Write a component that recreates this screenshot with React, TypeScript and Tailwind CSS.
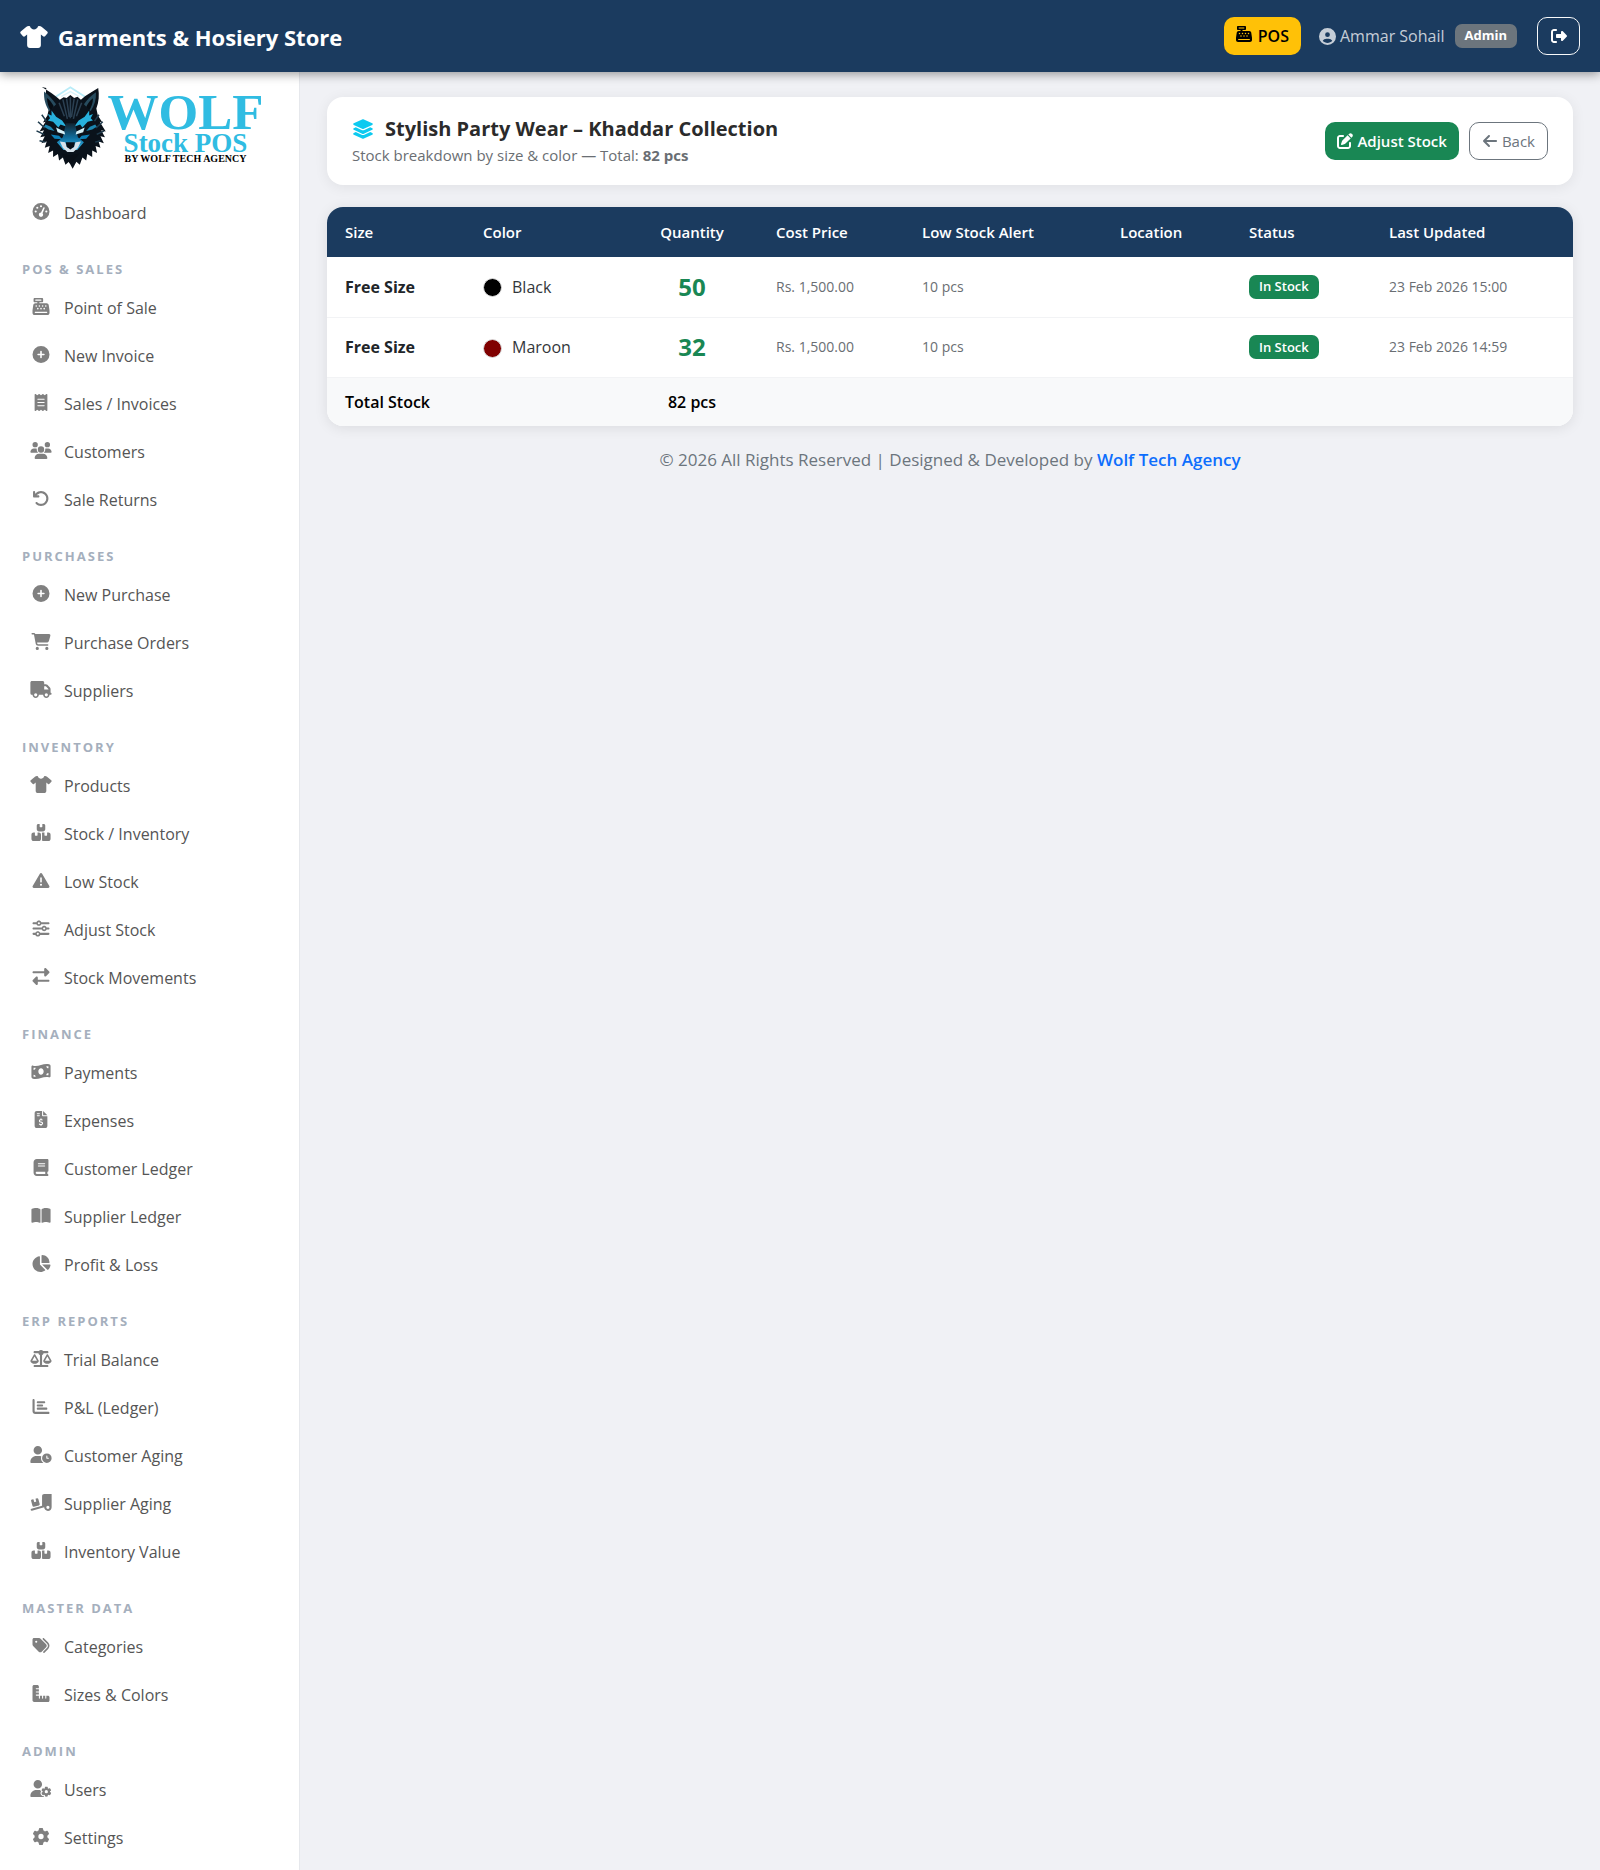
import type { IconType } from "react-icons";
import {
  FaArrowLeft,
  FaArrowRotateLeft,
  FaBook,
  FaBookOpen,
  FaBoxesStacked,
  FaCartShopping,
  FaCashRegister,
  FaChartBar,
  FaChartPie,
  FaCircleUser,
  FaCirclePlus,
  FaFileInvoiceDollar,
  FaGaugeHigh,
  FaGear,
  FaLayerGroup,
  FaMoneyBillWave,
  FaPenToSquare,
  FaReceipt,
  FaRightFromBracket,
  FaRightLeft,
  FaRulerCombined,
  FaScaleBalanced,
  FaShirt,
  FaSliders,
  FaTags,
  FaTriangleExclamation,
  FaTruck,
  FaTruckRampBox,
  FaUserClock,
  FaUserGear,
  FaUsers,
} from "react-icons/fa6";

type NavItem = { label: string; icon: IconType };
type NavGroup = { title?: string; items: NavItem[] };

const nav: NavGroup[] = [
  { items: [{ label: "Dashboard", icon: FaGaugeHigh }] },
  {
    title: "POS & Sales",
    items: [
      { label: "Point of Sale", icon: FaCashRegister },
      { label: "New Invoice", icon: FaCirclePlus },
      { label: "Sales / Invoices", icon: FaReceipt },
      { label: "Customers", icon: FaUsers },
      { label: "Sale Returns", icon: FaArrowRotateLeft },
    ],
  },
  {
    title: "Purchases",
    items: [
      { label: "New Purchase", icon: FaCirclePlus },
      { label: "Purchase Orders", icon: FaCartShopping },
      { label: "Suppliers", icon: FaTruck },
    ],
  },
  {
    title: "Inventory",
    items: [
      { label: "Products", icon: FaShirt },
      { label: "Stock / Inventory", icon: FaBoxesStacked },
      { label: "Low Stock", icon: FaTriangleExclamation },
      { label: "Adjust Stock", icon: FaSliders },
      { label: "Stock Movements", icon: FaRightLeft },
    ],
  },
  {
    title: "Finance",
    items: [
      { label: "Payments", icon: FaMoneyBillWave },
      { label: "Expenses", icon: FaFileInvoiceDollar },
      { label: "Customer Ledger", icon: FaBook },
      { label: "Supplier Ledger", icon: FaBookOpen },
      { label: "Profit & Loss", icon: FaChartPie },
    ],
  },
  {
    title: "ERP Reports",
    items: [
      { label: "Trial Balance", icon: FaScaleBalanced },
      { label: "P&L (Ledger)", icon: FaChartBar },
      { label: "Customer Aging", icon: FaUserClock },
      { label: "Supplier Aging", icon: FaTruckRampBox },
      { label: "Inventory Value", icon: FaBoxesStacked },
    ],
  },
  {
    title: "Master Data",
    items: [
      { label: "Categories", icon: FaTags },
      { label: "Sizes & Colors", icon: FaRulerCombined },
    ],
  },
  {
    title: "Admin",
    items: [
      { label: "Users", icon: FaUserGear },
      { label: "Settings", icon: FaGear },
    ],
  },
];

const rows = [
  { size: "Free Size", color: "Black", dot: "bg-black", qty: 50, cost: "Rs. 1,500.00", alert: "10 pcs", updated: "23 Feb 2026 15:00" },
  { size: "Free Size", color: "Maroon", dot: "bg-[#800000]", qty: 32, cost: "Rs. 1,500.00", alert: "10 pcs", updated: "23 Feb 2026 14:59" },
];

function WolfHead() {
  return (
    <svg viewBox="14 1 202 262" preserveAspectRatio="none" className="h-[92px] w-[76px] shrink-0" aria-hidden="true">
      <defs>
        <linearGradient id="face" x1="0" y1="0" x2="0" y2="1">
          <stop offset="0" stopColor="#12232f" />
          <stop offset="0.55" stopColor="#0f6f9f" />
          <stop offset="1" stopColor="#38b6e8" />
        </linearGradient>
      </defs>
      <path d="M78 48 116 22l38 26" fill="none" stroke="#b9ecf8" strokeWidth="5" />
      <path d="M92 48l24-14 24 14" fill="none" stroke="#d8f3fa" strokeWidth="4" />
      {/* fur silhouette */}
      <path
        d="M40 21c18 12 34 22 48 36l10-7 8 2 10-8 10 8 9-3 9 8c14-14 30-22 46-33 3 20 2 40-5 58l4 20 12 20-7-2 16 28-12-4 10 20-12-3 9 20-14-5 5 18-13-5 4 20-13-7 0 18-13-8-3 18-10-8-7 20-9-8-10 20-10-20-9 8-7-20-10 8-3-18-13 8 0-18-13 7 4-20-13 5 5-18-14 5 9-20-12 3 10-20-12 4 16-28-7 2 12-20 4-20c-8-18-10-38-7-58z"
        fill="#0a121b"
      />
      {/* ears */}
      <path d="M46 34c12 10 22 22 32 36l-18 20c-10-16-15-34-14-56zM184 36c-12 9-23 20-32 34l18 20c10-16 15-34 14-54z" fill="#274b5e" />
      <path d="M54 52c8 7 13 14 18 24l-8 12c-6-11-10-22-10-36zM176 53c-8 7-13 14-18 24l8 11c6-11 10-21 10-35z" fill="#070d14" />
      {/* forehead strands */}
      <path d="M96 56l12 56M106 54l7 52M116 50v60M126 54l-7 52M136 56l-12 56M86 66l14 38M146 66l-14 38" stroke="#2b4052" strokeWidth="4" />
      <path d="M40 100l12 18M30 120l18 18M26 146l20 10M34 174l16 4M192 100l-12 18M202 120l-18 18M206 146l-20 10M196 174l-14 4" stroke="#1f3b4d" strokeWidth="4" />
      {/* blue brows */}
      <path d="M66 88l12 18 16 10 12 18-16-6-6 8-14-16-14-4 6-6-6-12 10 4zM166 88l-12 18-16 10-12 18 16-6 6 8 14-16 14-4-6-6 6-12-10 4z" fill="#27b0dc" />
      <path d="M50 128l14 6 10 12-16-4-12-8zM182 128l-14 6-10 12 16-4 12-8z" fill="#1c86b1" />
      {/* muzzle */}
      <path d="M104 124h24l8 40 16 14-18 22h-36l-18-22 16-14z" fill="url(#face)" />
      <path d="M78 136l22 12 2 8-20-6zM154 136l-22 12-2 8 20-6z" fill="#d6f1f8" />
      <path d="M64 156l22 4 8 10-20-2zM168 156l-22 4-8 10 20-2z" fill="#0c80b8" />
      <path d="M88 176l14 2 6 16h16l6-16 14-2-8 18-12 12h-16l-12-12z" fill="#d7e2ea" />
      <path d="M104 178h24l-2 13-10 8-10-8zM92 210l24 6 24-6-24 30z" fill="#090f17" />
    </svg>
  );
}

function Logo() {
  return (
    <div className="flex h-[117px] justify-center pt-2 pr-1">
      <WolfHead />
      <div className="flex flex-col items-center pt-3 font-['Liberation_Serif',serif] font-bold whitespace-nowrap">
        <span className="text-[51px] leading-[40px] text-[#30bce2]">WOLF</span>
        <span className="text-[27px] leading-[22px] text-[#30bce2]">Stock POS</span>
        <span className="text-[10px] leading-[10px] text-black">BY WOLF TECH AGENCY</span>
      </div>
    </div>
  );
}

function Sidebar() {
  return (
    <aside className="w-[300px] shrink-0 border-r border-[#e6e8ec] bg-white pb-2">
      <Logo />
      <nav>
        {nav.map((group, i) => (
          <div key={i}>
            {group.title && (
              <h2 className="px-[22px] pt-6 pb-[7px] text-[13px] leading-4 font-bold tracking-[2px] text-[#a5afbd] uppercase">
                {group.title}
              </h2>
            )}
            <ul>
              {group.items.map(({ label, icon: Icon }) => (
                <li key={label}>
                  <a href="#" className="flex h-12 items-center gap-3 pl-[30px] text-base text-[#555]">
                    <Icon className="mb-1 h-[17px] w-[22px] shrink-0 text-[#808080]" />
                    {label}
                  </a>
                </li>
              ))}
            </ul>
          </div>
        ))}
      </nav>
    </aside>
  );
}

function Header() {
  return (
    <header className="relative z-10 flex h-[72px] items-center justify-between bg-[#1b3b5f] px-5 shadow-[0_2px_10px_rgba(0,0,0,0.4)]">
      <a href="#" className="flex items-center gap-[10px] pt-[2px] text-[22px] font-bold text-white">
        <FaShirt className="h-[22px] w-7" />
        Garments &amp; Hosiery Store
      </a>
      <div className="flex items-center">
        <a href="#" className="flex h-[38px] items-center gap-[6px] rounded-[10px] bg-[#ffc107] px-3 text-base font-semibold text-black">
          <FaCashRegister className="mb-1 size-4" />
          POS
        </a>
        <span className="ml-[18px] flex items-center gap-1 text-base text-white/75">
          <FaCircleUser className="text-[17px]" />
          Ammar Sohail
        </span>
        <span className="ml-[10px] flex h-6 items-center rounded-[7px] bg-[#6c757d] px-[10px] text-[13px] font-bold text-white">
          Admin
        </span>
        <button aria-label="Log out" className="ml-5 flex h-[38px] w-[43px] items-center justify-center rounded-[10px] border border-[#f8f9fa] text-base text-white">
          <FaRightFromBracket />
        </button>
      </div>
    </header>
  );
}

function PageHeading() {
  return (
    <section className="flex items-center justify-between rounded-2xl bg-white px-[25px] py-5 shadow-[0_2px_14px_rgba(0,0,0,0.07)]">
      <div>
        <h1 className="flex items-center gap-[11px] text-[20px] leading-6 font-bold text-[#2b2b2b]">
          <FaLayerGroup className="text-[22px] text-[#0dcaf0]" />
          Stylish Party Wear – Khaddar Collection
        </h1>
        <p className="mt-1 text-[15px] leading-5 text-[#6a6e73]">
          Stock breakdown by size &amp; color — Total: <strong>82 pcs</strong>
        </p>
      </div>
      <div className="flex gap-[10px]">
        <button className="flex h-[38px] items-center gap-1 rounded-[10px] bg-[#198754] px-3 text-[15px] font-semibold text-white">
          <FaPenToSquare className="text-base" />
          Adjust Stock
        </button>
        <a href="#" className="flex h-[38px] items-center gap-1 rounded-[10px] border border-[#6c757d] px-3 text-[15px] font-medium text-[#6c757d]">
          <FaArrowLeft className="text-base" />
          Back
        </a>
      </div>
    </section>
  );
}

function StockTable() {
  return (
    <div className="mt-[22px] overflow-hidden rounded-2xl bg-white shadow-[0_2px_14px_rgba(0,0,0,0.09)]">
      <table className="w-full table-fixed text-left">
        <colgroup>
          <col className="w-[138px]" />
          <col className="w-[161px]" />
          <col className="w-[132px]" />
          <col className="w-[146px]" />
          <col className="w-[198px]" />
          <col className="w-[129px]" />
          <col className="w-[140px]" />
          <col />
        </colgroup>
        <thead className="bg-[#1b3b5f] text-[15px] text-white">
          <tr className="h-[50px]">
            <th className="px-[18px] font-semibold">Size</th>
            <th className="px-[18px] font-semibold">Color</th>
            <th className="px-[18px] text-center font-semibold">Quantity</th>
            <th className="px-[18px] font-semibold">Cost Price</th>
            <th className="px-[18px] font-semibold">Low Stock Alert</th>
            <th className="px-[18px] font-semibold">Location</th>
            <th className="px-[18px] font-semibold">Status</th>
            <th className="px-[18px] font-semibold">Last Updated</th>
          </tr>
        </thead>
        <tbody>
          {rows.map((row) => (
            <tr key={row.color} className="h-[60px] border-b border-[#f2f3f5] text-sm text-[#6a6e73]">
              <td className="px-[18px] text-base font-bold text-[#212529]">{row.size}</td>
              <td className="px-[18px] text-base text-[#33373b]">
                <span className="flex items-center gap-[10px]">
                  <span className={`mt-[2px] size-[19px] rounded-full border border-[#dddddd] ${row.dot}`} />
                  {row.color}
                </span>
              </td>
              <td className="px-[18px] text-center text-2xl font-bold text-[#198754]">{row.qty}</td>
              <td className="px-[18px]">{row.cost}</td>
              <td className="px-[18px]">{row.alert}</td>
              <td className="px-[18px]" />
              <td className="px-[18px]">
                <span className="inline-flex h-6 items-center rounded-[7px] bg-[#198754] px-[10px] text-[13px] font-semibold text-white">
                  In Stock
                </span>
              </td>
              <td className="px-[18px]">{row.updated}</td>
            </tr>
          ))}
        </tbody>
        <tfoot className="bg-[#f8f9fa] text-base font-semibold text-black">
          <tr className="h-[49px]">
            <td colSpan={2} className="px-[18px]">Total Stock</td>
            <td className="px-[18px] text-center">82 pcs</td>
            <td colSpan={5} />
          </tr>
        </tfoot>
      </table>
    </div>
  );
}

export default function App() {
  return (
    <div className="flex min-h-screen flex-col bg-[#f0f1f5] font-['Open_Sans','Noto_Sans',sans-serif]">
      <Header />
      <div className="flex flex-1">
        <Sidebar />
        <main className="min-w-0 flex-1 px-[27px] pt-[25px]">
          <PageHeading />
          <StockTable />
          <footer className="mt-[22px] text-center text-[17px] leading-6 text-[#6c757d]">
            © 2026 All Rights Reserved | Designed &amp; Developed by{" "}
            <a href="#" className="font-semibold text-[#0d6efd]">Wolf Tech Agency</a>
          </footer>
        </main>
      </div>
    </div>
  );
}
